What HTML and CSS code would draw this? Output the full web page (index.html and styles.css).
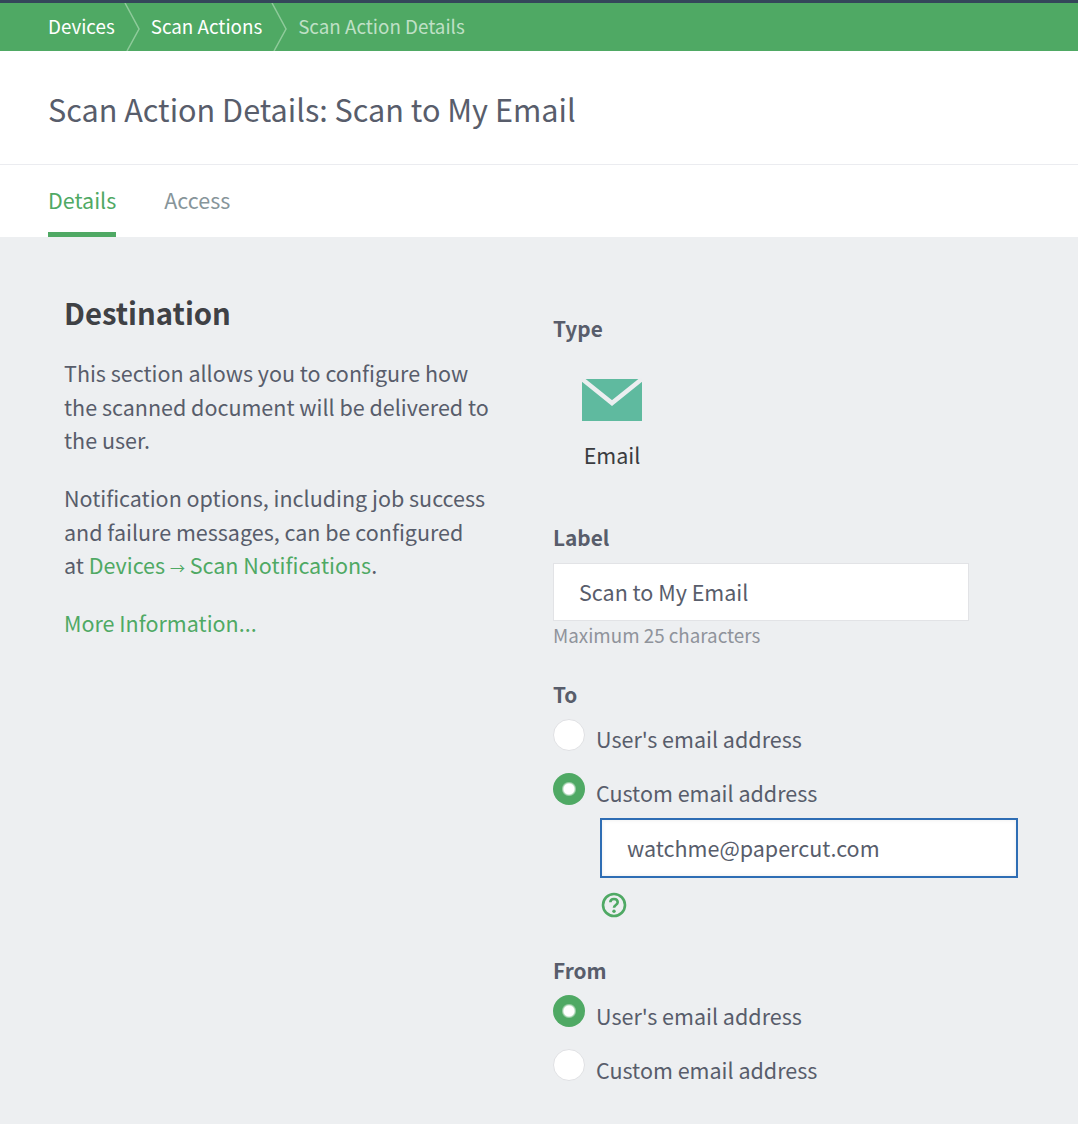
FILE: index.html
```html
<!DOCTYPE html>
<html lang="en">
<head>
<meta charset="utf-8">
<title>Scan Action Details</title>
<link rel="stylesheet" href="styles.css">
</head>
<body>
<nav class="crumbs">
  <a class="crumb">Devices</a>
  <svg class="sep" width="16" height="48" viewBox="0 0 16 48"><path d="M1 0 L15 26 L3 48" fill="none" stroke="#8fcb9b" stroke-width="1.5"/></svg>
  <a class="crumb">Scan Actions</a>
  <svg class="sep" width="16" height="48" viewBox="0 0 16 48"><path d="M1 0 L15 26 L3 48" fill="none" stroke="#8fcb9b" stroke-width="1.5"/></svg>
  <span class="crumb current">Scan Action Details</span>
</nav>
<header class="title"><h1>Scan Action Details: Scan to My Email</h1></header>
<div class="tabs">
  <a class="tab active">Details</a>
  <a class="tab">Access</a>
</div>
<main class="content">
  <section class="intro">
    <h2>Destination</h2>
    <p>This section allows you to configure how the scanned document will be delivered to the user.</p>
    <p class="narrow">Notification options, including job success and failure messages, can be configured at <a>Devices <span class="arrow">→</span> Scan Notifications</a>.</p>
    <p class="more"><a>More Information...</a></p>
  </section>
  <form class="form">
    <div class="label type-label">Type</div>
    <div class="type">
      <svg width="62" height="44" viewBox="0 0 62 44"><rect x="1" y="1" width="60" height="42" fill="#5fba9f"/><path d="M1 1 L31 25 L61 1" fill="none" stroke="#eceef0" stroke-width="4.5"/></svg>
      <span>Email</span>
    </div>
    <div class="label label-label">Label</div>
    <div class="input">Scan to My Email</div>
    <div class="hint">Maximum 25 characters</div>
    <div class="label to-label">To</div>
    <div class="radio first"><i class="dot"></i>User's email address</div>
    <div class="radio"><i class="dot on"></i>Custom email address</div>
    <div class="input focus">watchme@papercut.com</div>
    <svg class="help" width="26" height="26" viewBox="0 0 26 26"><circle cx="13" cy="13" r="11" fill="none" stroke="#4fa964" stroke-width="2.6"/><path d="M9.3 10.3 C9.3 5.8 16.7 5.8 16.7 10.3 C16.7 13 13 13 13 15.8" fill="none" stroke="#4fa964" stroke-width="2.6"/><circle cx="13" cy="19.2" r="1.7" fill="#4fa964"/></svg>
    <div class="label from-label">From</div>
    <div class="radio first low"><i class="dot on"></i>User's email address</div>
    <div class="radio last"><i class="dot"></i>Custom email address</div>
  </form>
</main>
</body>
</html>
```
FILE: styles.css
```css
* { box-sizing: border-box; }
html, body { margin: 0; height: 1124px; overflow: hidden; }
body {
  font-family: "Noto Sans CJK SC", "Open Sans", sans-serif;
  font-size: 21.5px;
  line-height: 33.5px;
  color: #585d6b;
  background: #edeff1;
}
.crumbs {
  height: 51px;
  border-top: 3px solid #34465a;
  background: #4fa964;
  padding: 0 0 2px 48px;
  display: flex;
  align-items: center;
  font-size: 18.8px;
  color: #fff;
}
.sep { margin: 2px 11px 0 9px; flex: none; }
.crumb.current { color: #bfe0c6; }
.title {
  height: 114px;
  background: #fff;
  border-bottom: 1px solid #ebecf0;
  padding: 38px 48px 0;
}
h1 { margin: 0; font-size: 30.6px; line-height: 40px; font-weight: 400; color: #585d6b; }
.tabs {
  height: 72px;
  background: #fff;
  padding-left: 48px;
  display: flex;
  gap: 48px;
}
.tab {
  height: 72px;
  padding-top: 18px;
  color: #87959a;
}
.tab.active { color: #4fa964; border-bottom: 5px solid #4fa964; }
.content { display: flex; padding: 0 0 0 64px; }
.intro { width: 489px; flex: none; padding-top: 56px; }
h2 { margin: 0 0 25px; font-size: 29.3px; line-height: 38px; font-weight: 700; color: #3f4145; }
.intro p { margin: 0 0 24.5px; max-width: 426px; }
.intro p.narrow { max-width: 423px; margin-bottom: 24.5px; }
.intro a { color: #4fa964; }
.arrow { display: inline-block; font-size: 15px; line-height: 1; }
.form { display: flex; flex-direction: column; width: 465px; }
.label { font-weight: 700; font-size: 20.8px; line-height: 30px; }
.type-label { margin-top: 76px; }
.type { width: 118px; display: flex; flex-direction: column; align-items: center; margin-top: 35px; color: #3a3c40; }
.type span { margin-top: 16px; }
.label-label { margin-top: 50px; }
.input {
  width: 416px;
  height: 58px;
  margin-top: 11px;
  background: #fff;
  border: 1px solid #e2e3e6;
  padding: 0 25px;
  line-height: 56px;
}
.hint { font-size: 18.8px; color: #8f939b; line-height: 30px; margin-top: -1px; }
.to-label { margin-top: 29px; }
.radio { display: flex; align-items: center; height: 54px; }
.radio.first { margin-top: 3px; }
.radio.last { margin-top: 1px; }
.radio.low { padding-top: 2px; }
.dot { width: 32px; height: 32px; border-radius: 50%; background: #fff; border: 1px solid #e0e1e4; margin: 0 11px 8px 0; flex: none; }
.dot.on { border: none; background: radial-gradient(circle, #fff 0 5px, #4fa964 7.5px); }
.low .dot, .last .dot { margin-bottom: 10px; }
.input.focus { margin: -2px 0 0 47px; width: 418px; height: 60px; line-height: 56px; border: 2px solid #2e6db4; box-shadow: inset 0 0 4px rgba(0,0,0,.08); }
.help { margin: 14px 0 0 48px; flex: none; }
.from-label { margin-top: 37px; }
```
